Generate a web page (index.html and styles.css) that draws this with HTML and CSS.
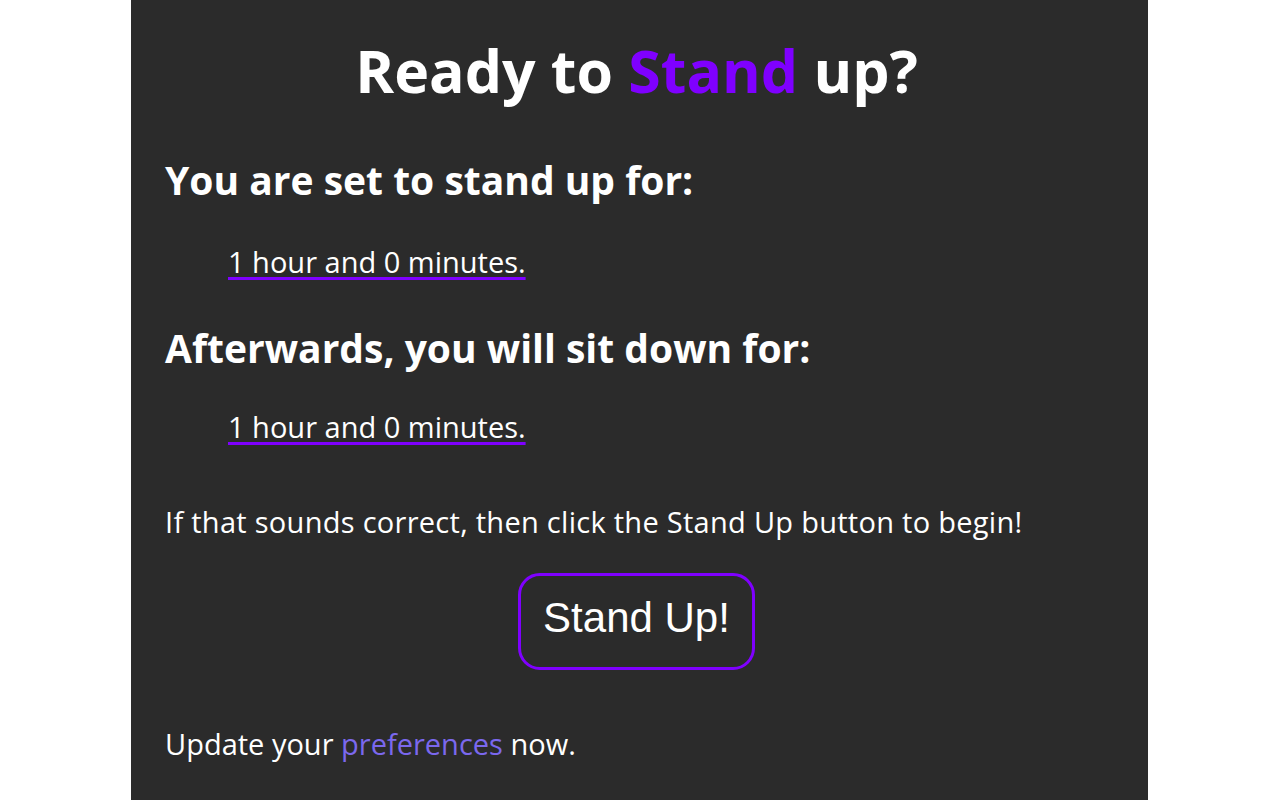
FILE: index.html
```html
<!DOCTYPE html>
<html lang="en">
<head>
<meta charset="utf-8">
<title>Ready to Stand up?</title>
<link rel="stylesheet" href="styles.css">
</head>
<body>
<main class="panel">
  <h1 class="title">Ready to <span class="accent">Stand</span> up?</h1>
  <h2 class="label">You are set to stand up for:</h2>
  <p class="duration"><span class="value">1 hour and 0 minutes.</span></p>
  <h2 class="label label-second">Afterwards, you will sit down for:</h2>
  <p class="duration duration-second"><span class="value">1 hour and 0 minutes.</span></p>
  <p class="note">If that sounds correct, then click the Stand Up button to begin!</p>
  <div class="actions">
    <button class="stand-btn" type="button">Stand Up!</button>
  </div>
  <p class="footer">Update your <a class="link" href="#">preferences</a> now.</p>
</main>
</body>
</html>
```

FILE: styles.css
```css
html, body {
  margin: 0;
  padding: 0;
  background: #ffffff;
}

body {
  font-family: "Open Sans", "Noto Sans", sans-serif;
  color: #ffffff;
}

.panel {
  width: 1017px;
  min-height: 800px;
  margin: 0 0 0 131px;
  box-sizing: border-box;
  padding: 39px 40px 0 34px;
  background: #2b2b2b;
  display: flex;
  flex-direction: column;
}

.title {
  margin: 0;
  font-size: 59px;
  line-height: 62px;
  font-weight: 700;
  text-align: center;
}

.accent {
  color: #7f00ff;
}

.label {
  margin: 56px 0 0;
  font-size: 39px;
  line-height: 46px;
  font-weight: 700;
}

.label-second {
  margin-top: 45px;
}

.duration {
  margin: 41px 0 0 63px;
  font-size: 29px;
  line-height: 36px;
}

.duration-second {
  margin-top: 38px;
}

.value {
  text-decoration: underline;
  text-decoration-color: #7f00ff;
  text-decoration-thickness: 3px;
  text-underline-offset: 4px;
}

.note {
  margin: 59px 0 0;
  font-size: 29px;
  line-height: 36px;
  letter-spacing: 0.28px;
}

.actions {
  margin-top: 33px;
  display: flex;
  justify-content: center;
}

.stand-btn {
  width: 237px;
  height: 97px;
  box-sizing: border-box;
  padding: 21px 0 28px;
  border: 3px solid #7f00ff;
  border-radius: 22px;
  background: transparent;
  color: #ffffff;
  font-family: "Liberation Sans", Arial, sans-serif;
  font-size: 42px;
  line-height: 42px;
}

.footer {
  margin: 56px 0 0;
  font-size: 29px;
  line-height: 36px;
}

.link {
  color: #7b68ee;
  text-decoration: none;
}
```
